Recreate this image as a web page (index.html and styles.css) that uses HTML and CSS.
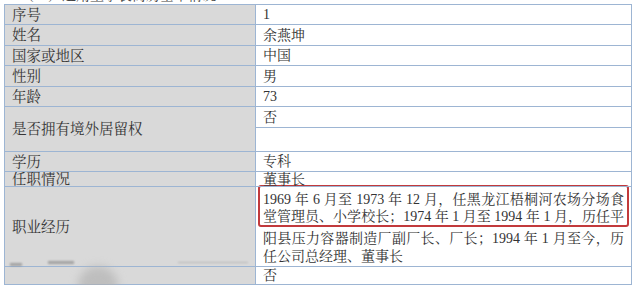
FILE: index.html
```html
<!DOCTYPE html>
<html>
<head>
    <meta charset="utf-8">
    <link rel="stylesheet" href="styles.css">
</head>
<body>
    <div class="page">
        <div class="caption"><span>（一）选用董事长简历基本情况</span></div>
        <table class="info">
            <colgroup>
                <col class="col-label">
                <col class="col-value">
            </colgroup>
            <tr class="row-a"><th>序号</th><td>1</td></tr>
            <tr class="row-b"><th>姓名</th><td>余燕坤</td></tr>
            <tr class="row-a"><th>国家或地区</th><td>中国</td></tr>
            <tr class="row-b"><th>性别</th><td>男</td></tr>
            <tr class="row-a"><th>年龄</th><td>73</td></tr>
            <tr class="row-b"><th rowspan="2">是否拥有境外居留权</th><td>否</td></tr>
            <tr class="row-c"><td></td></tr>
            <tr class="row-a"><th>学历</th><td>专科</td></tr>
            <tr class="row-d"><th>任职情况</th><td>董事长</td></tr>
            <tr class="row-career">
                <th>职业经历</th>
                <td class="career">
                    <!-- first two lines are boxed -->
                    <div class="marked">
                        <div class="line full">1969 年 6 月至 1973 年 12 月，任黑龙江梧桐河农场分场食</div>
                        <div class="line full">堂管理员、小学校长；1974 年 1 月至 1994 年 1 月，历任平</div>
                    </div>
                    <div class="rest">
                        <div class="line full">阳县压力容器制造厂副厂长、厂长；1994 年 1 月至今，历</div>
                        <div class="line">任公司总经理、董事长</div>
                    </div>
                </td>
            </tr>
            <tr class="row-last"><th></th><td>否</td></tr>
        </table>
        <!-- faded stamp over the bottom-left corner -->
        <div class="smudge">
            <span class="dash dash-1"></span>
            <span class="dash dash-2"></span>
            <span class="dash dash-3"></span>
            <span class="blob"></span>
        </div>
    </div>
</body>
</html>
```

FILE: styles.css
```css
body {
    margin: 0;
    background: #fff;
    font-family: "Liberation Serif", "Noto Serif CJK SC", "Noto Sans CJK SC", serif;
    color: #333;
}

.page {
    position: relative;
    width: 640px;
    height: 285px;
    overflow: hidden;
    padding-left: 4px;
    box-sizing: border-box;
}

/* tail of the heading above the table */
.caption {
    height: 4px;
    overflow: hidden;
    padding-left: 16px;
}

.caption span {
    display: block;
    margin-top: -12px;
    font-size: 14px;
    line-height: 15px;
    color: #444;
}

.info {
    border-collapse: collapse;
    table-layout: fixed;
    width: 628px;
    font-size: 14px;
}

.col-label {
    width: 251px;
}

.info th,
.info td {
    border: 1px solid #9db5d3;
    padding: 0 6px 0 7px;
    line-height: 16px;
    text-align: left;
    font-weight: normal;
}

.info th {
    background: #d9d9d9;
    color: #363636;
    font-size: 14.5px;
    vertical-align: middle;
}

.info td {
    background: #fff;
    vertical-align: middle;
    padding-top: 1px;
}

.row-a { height: 20px; }
.row-b { height: 21px; }
.row-c { height: 24px; }
.row-d { height: 14px; }
.row-last { height: 17px; }

.row-d th,
.row-d td {
    line-height: 13px;
    overflow: hidden;
}

.info td.career {
    vertical-align: top;
    padding: 0 2px;
}

.line {
    text-align: justify;
}

.line.full {
    text-align-last: justify;
}

.marked {
    border: 2px solid #c23a3c;
    border-radius: 3px;
    padding: 4px 3px 0 3px;
    margin-top: -2px;
}

.marked .line {
    line-height: 17px;
}

.rest {
    padding: 3px 5px 0 5px;
}

.rest .line {
    line-height: 18px;
}

.smudge {
    position: absolute;
    left: 0;
    top: 256px;
    width: 255px;
    height: 29px;
    pointer-events: none;
}

.dash {
    position: absolute;
    height: 3px;
    background: #8a8a8a;
    filter: blur(1px);
    opacity: 0.7;
}

.dash-1 { left: 10px; top: 7px; width: 12px; }
.dash-2 { left: 48px; top: 5px; width: 26px; }
.dash-3 { left: 178px; top: 6px; width: 70px; height: 1px; opacity: 0.5; }

.blob {
    position: absolute;
    left: 78px;
    top: 10px;
    width: 40px;
    height: 40px;
    border-radius: 50%;
    background: #b0b0b0;
    filter: blur(5px);
    opacity: 0.65;
}
```
